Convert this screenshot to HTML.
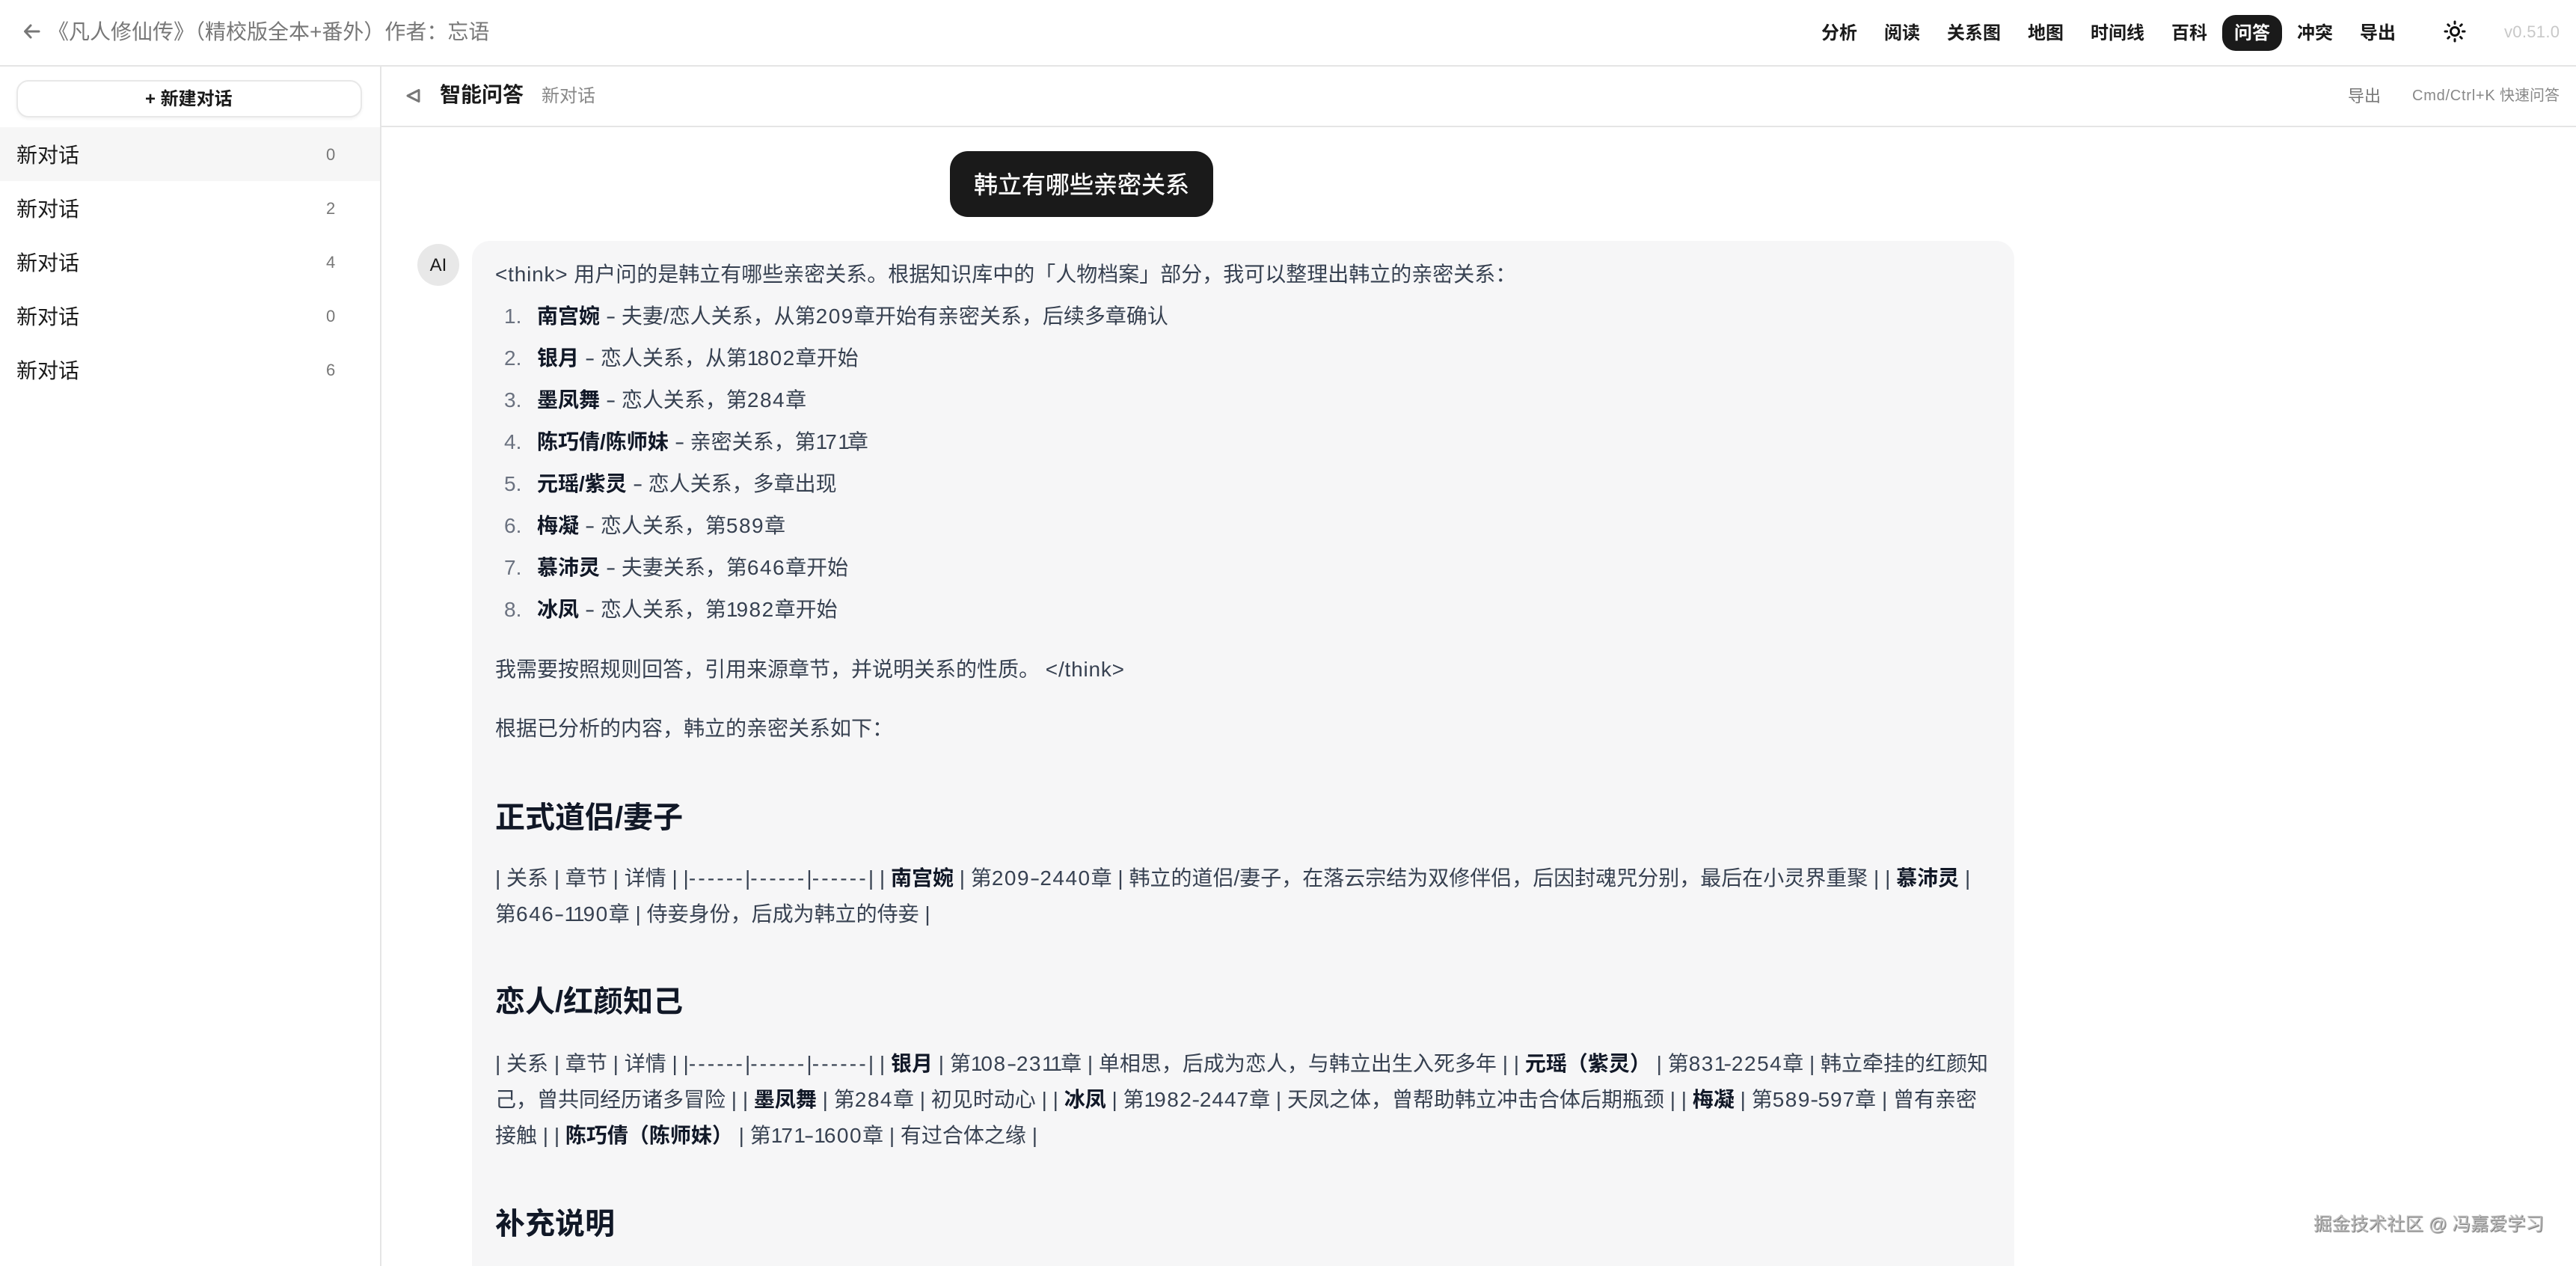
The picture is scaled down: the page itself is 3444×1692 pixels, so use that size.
<!DOCTYPE html>
<html lang="zh">
<head>
<meta charset="utf-8">
<title>智能问答</title>
<style>
html,body{margin:0;padding:0;width:3444px;height:1692px;overflow:hidden;background:#fff}
body{position:relative;font-family:"Liberation Sans","Noto Sans CJK SC",sans-serif;color:#374151}
.a{position:absolute}
.t{position:absolute;white-space:nowrap;line-height:48px;height:48px}
b{font-weight:700;color:#111827}
i{font-style:normal;letter-spacing:1.5px}
s{text-decoration:none;letter-spacing:-2px}
u{text-decoration:none;display:inline-block;width:13.300px;text-align:center;transform:scaleX(1.45)}
u.r{width:9.500px;transform:scaleX(1.15)}
em{font-style:normal;letter-spacing:3.200px}
kbd{font:inherit;letter-spacing:.8px}
.nav{font-size:24px;font-weight:700;color:#1a1a1a;transform:translateX(-50%)}
.row{font-size:28px;color:#1a1a1a;left:22px}
.cnt{font-size:22px;color:#777;left:436px}
.p{font-size:28px;color:#374151;left:662px}
.n{font-size:28px;color:#6b7280;left:674px}
.li{font-size:28px;color:#374151;left:718px}
.h{font-size:40px;font-weight:700;color:#111827;left:662px}
</style>
</head>
<body>
<!-- top bar -->
<div class="a" style="left:0;top:87px;width:3444px;height:2px;background:#e5e5e5"></div>
<svg class="a" style="left:28px;top:28px" width="30" height="28" viewBox="0 0 30 28" fill="none" stroke="#777" stroke-width="3" stroke-linecap="round" stroke-linejoin="round"><path d="M6 14H24M13 6L5.500 14L13 22"/></svg>
<div class="t" style="left:64px;top:19px;font-size:28px;color:#777">《凡人修仙传》（精校版全本+番外）作者：忘语</div>

<div class="t nav" style="left:2459px;top:21px">分析</div>
<div class="t nav" style="left:2543px;top:21px">阅读</div>
<div class="t nav" style="left:2639px;top:21px">关系图</div>
<div class="t nav" style="left:2735px;top:21px">地图</div>
<div class="t nav" style="left:2831px;top:21px">时间线</div>
<div class="t nav" style="left:2927px;top:21px">百科</div>
<div class="a" style="left:2971px;top:20px;width:80px;height:48px;border-radius:18px;background:#1a1a1a"></div>
<div class="t nav" style="left:3011px;top:21px;color:#fff">问答</div>
<div class="t nav" style="left:3095px;top:21px">冲突</div>
<div class="t nav" style="left:3179px;top:21px">导出</div>
<svg class="a" style="left:3264px;top:24px" width="36" height="36" viewBox="0 0 36 36" fill="none" stroke="#111" stroke-width="3" stroke-linecap="round"><circle cx="18" cy="18" r="5.500"/><path d="M18 5V7.500M18 28.500V31M5 18H7.500M28.500 18H31M8.800 8.800L10.500 10.500M25.500 25.500L27.200 27.200M8.800 27.200L10.500 25.500M25.500 10.500L27.200 8.800"/></svg>
<div class="t" style="left:3348px;top:19px;font-size:22px;color:#c8c8c8;letter-spacing:.3px">v0.51.0</div>

<!-- sidebar -->
<div class="a" style="left:508px;top:89px;width:2px;height:1603px;background:#e5e5e5"></div>
<div class="a" style="left:22px;top:107px;width:458px;height:46px;border:2px solid #e8e8e8;border-radius:16px;background:#fff;box-shadow:0 2px 4px rgba(0,0,0,.05)"></div>
<div class="t" style="left:194px;top:109px;font-size:24px;font-weight:700;color:#1a1a1a">+ 新建对话</div>
<div class="a" style="left:0;top:170px;width:508px;height:72px;background:#f6f6f6"></div>
<div class="t row" style="top:184px">新对话</div><div class="t cnt" style="top:183px">0</div>
<div class="t row" style="top:256px">新对话</div><div class="t cnt" style="top:255px">2</div>
<div class="t row" style="top:328px">新对话</div><div class="t cnt" style="top:327px">4</div>
<div class="t row" style="top:400px">新对话</div><div class="t cnt" style="top:399px">0</div>
<div class="t row" style="top:472px">新对话</div><div class="t cnt" style="top:471px">6</div>

<!-- sub header -->
<div class="a" style="left:510px;top:168px;width:2934px;height:2px;background:#e5e5e5"></div>
<svg class="a" style="left:539px;top:116px" width="26" height="24" viewBox="0 0 26 24" fill="none" stroke="#777" stroke-width="3" stroke-linejoin="round"><path d="M6 12L21 4.500V19.500Z"/></svg>
<div class="t" style="left:588px;top:103px;font-size:28px;font-weight:700;color:#1a1a1a">智能问答</div>
<div class="t" style="left:724px;top:105px;font-size:24px;color:#888">新对话</div>
<div class="t" style="left:3139px;top:105px;font-size:22px;color:#777">导出</div>
<div class="t" style="left:3225px;top:104px;font-size:20px;color:#888"><span style="letter-spacing:.75px">Cmd/Ctrl+K</span> 快速问答</div>

<!-- user bubble -->
<div class="a" style="left:1270px;top:202px;width:352px;height:88px;border-radius:24px;background:#1a1a1a"></div>
<div class="t" style="left:1302px;top:223px;font-size:32px;color:#fff;-webkit-text-stroke:.4px #fff">韩立有哪些亲密关系</div>

<!-- AI -->
<div class="a" style="left:558px;top:326px;width:56px;height:56px;border-radius:50%;background:#e8e8e8"></div>
<div class="t" style="left:558px;top:331px;width:56px;text-align:center;font-size:24px;color:#1a1a1a">AI</div>
<div class="a" style="left:631px;top:322px;width:2062px;height:1400px;border-radius:24px;background:#f6f6f7"></div>

<div class="t p" style="top:343px"><kbd>&lt;think&gt;</kbd> 用户问的是韩立有哪些亲密关系。根据知识库中的「人物档案」部分，我可以整理出韩立的亲密关系：</div>

<div class="t n" style="top:399px">1.</div><div class="t li" style="top:399px"><b>南宫婉</b> <u>-</u> 夫妻/恋人关系，从第<i>209</i>章开始有亲密关系，后续多章确认</div>
<div class="t n" style="top:455px">2.</div><div class="t li" style="top:455px"><b>银月</b> <u>-</u> 恋人关系，从第<s>1</s><i>802</i>章开始</div>
<div class="t n" style="top:511px">3.</div><div class="t li" style="top:511px"><b>墨凤舞</b> <u>-</u> 恋人关系，第<i>284</i>章</div>
<div class="t n" style="top:567px">4.</div><div class="t li" style="top:567px"><b>陈巧倩/陈师妹</b> <u>-</u> 亲密关系，第<s style="letter-spacing:-3px">1</s><i>7</i><s style="letter-spacing:-3px">1</s>章</div>
<div class="t n" style="top:623px">5.</div><div class="t li" style="top:623px"><b>元瑶/紫灵</b> <u>-</u> 恋人关系，多章出现</div>
<div class="t n" style="top:679px">6.</div><div class="t li" style="top:679px"><b>梅凝</b> <u>-</u> 恋人关系，第<i>589</i>章</div>
<div class="t n" style="top:735px">7.</div><div class="t li" style="top:735px"><b>慕沛灵</b> <u>-</u> 夫妻关系，第<i>646</i>章开始</div>
<div class="t n" style="top:791px">8.</div><div class="t li" style="top:791px"><b>冰凤</b> <u>-</u> 恋人关系，第<s>1</s><i>982</i>章开始</div>

<div class="t p" style="top:871px">我需要按照规则回答，引用来源章节，并说明关系的性质。 <kbd>&lt;/think&gt;</kbd></div>
<div class="t p" style="top:950px">根据已分析的内容，韩立的亲密关系如下：</div>

<div class="t h" style="top:1069px">正式道侣/妻子</div>
<div class="t p" style="top:1150px">| 关系 | 章节 | 详情 | |<em>------</em>|<em>------</em>|<em>------</em>| | <b>南宫婉</b> | 第<i>209</i><u>-</u><i>2440</i>章 | 韩立的道侣/妻子，在落云宗结为双修伴侣，后因封魂咒分别，最后在小灵界重聚 | | <b>慕沛灵</b> |</div>
<div class="t p" style="top:1198px">第<i>646</i><u>-</u><s>11</s><i>90</i>章 | 侍妾身份，后成为韩立的侍妾 |</div>

<div class="t h" style="top:1315px">恋人/红颜知己</div>
<div class="t p" style="top:1398px">| 关系 | 章节 | 详情 | |<em>------</em>|<em>------</em>|<em>------</em>| | <b>银月</b> | 第<s>1</s><i>08</i><u>-</u><i>23</i><s>11</s>章 | 单相思，后成为恋人，与韩立出生入死多年 | | <b>元瑶（紫灵）</b> | 第<i>83</i><s>1</s><u class="r">-</u><i>2254</i>章 | 韩立牵挂的红颜知</div>
<div class="t p" style="top:1446px">己，曾共同经历诸多冒险 | | <b>墨凤舞</b> | 第<i>284</i>章 | 初见时动心 | | <b>冰凤</b> | 第<s>1</s><i>982</i><u class="r">-</u><i style="letter-spacing:1px">2447</i>章 | 天凤之体，曾帮助韩立冲击合体后期瓶颈 | | <b>梅凝</b> | 第<i>589</i><u class="r">-</u><i style="letter-spacing:1px">597</i>章 | 曾有亲密</div>
<div class="t p" style="top:1494px">接触 | | <b>陈巧倩（陈师妹）</b> | 第<s>1</s><i>7</i><s>1</s><u>-</u><s>1</s><i>600</i>章 | 有过合体之缘 |</div>

<div class="t h" style="top:1612px">补充说明</div>

<div class="t" style="left:3093px;top:1613px;font-size:24.500px;color:#bcbcbc;text-shadow:1px 1px 1px #666,-1px -1px 0 #fff">掘金技术社区 @ 冯嘉爱学习</div>
</body>
</html>
